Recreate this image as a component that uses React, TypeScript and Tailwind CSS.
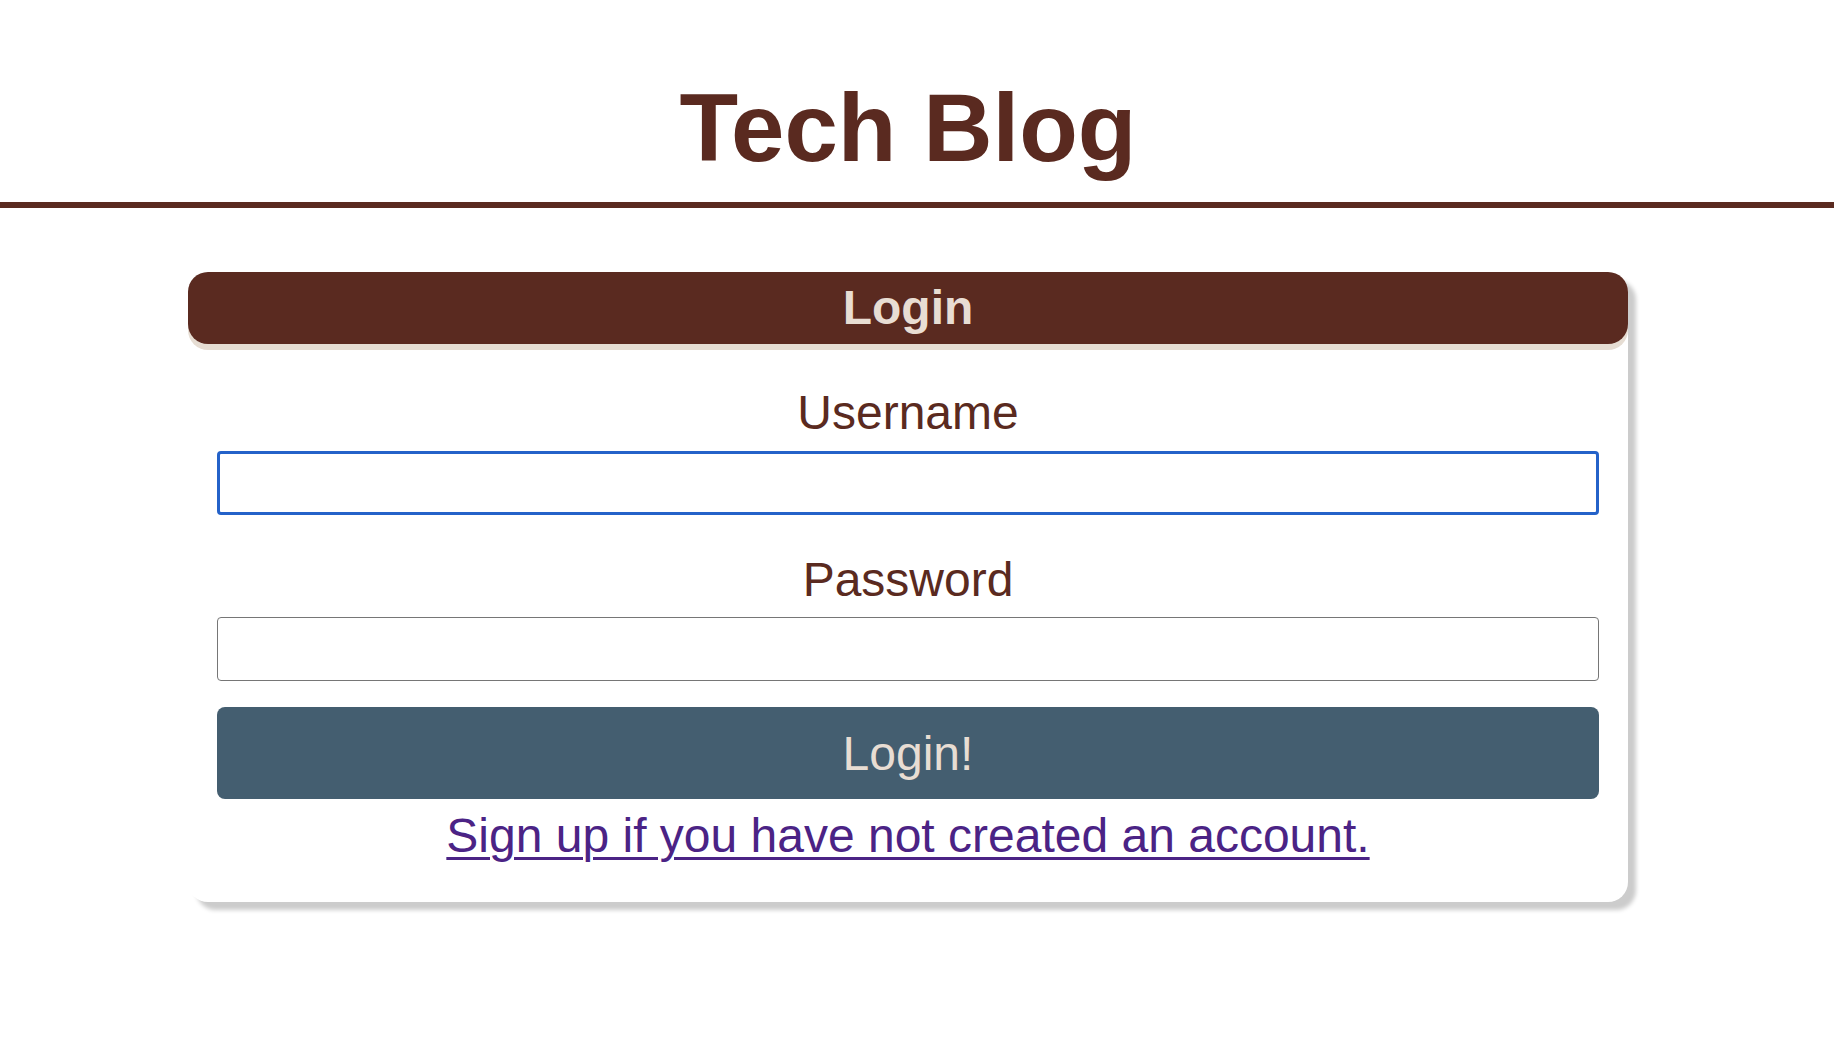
import { useState } from "react";

export default function App() {
  const [username, setUsername] = useState("");
  const [password, setPassword] = useState("");

  const handleSubmit = (e: React.FormEvent<HTMLFormElement>) => {
    e.preventDefault();
  };

  return (
    <div className="min-h-screen bg-white font-['Liberation_Sans',Arial,sans-serif]">
      {/* Header */}
      <header className="pt-[73px] pb-[19px] border-b-[6px] border-[#5a2a20]">
        <h1 className="w-[1816px] text-center text-[96px] leading-[110px] font-bold text-[#5a2a20]">
          Tech Blog
        </h1>
      </header>

      {/* Login card */}
      <main className="w-[1816px] pt-16 pb-16">
        <section className="mx-auto w-[1440px] rounded-[20px] bg-white shadow-[8px_8px_4px_#cccccc]">
          <h2 className="h-[72px] rounded-[20px] bg-[#5a2a20] text-center text-[48px] leading-[72px] font-bold text-[#e8ddd3] shadow-[0_6px_0_#e6ddd3]">
            Login
          </h2>
          <form
            onSubmit={handleSubmit}
            className="flex flex-col px-[29px] pt-[41px] pb-[39px] text-center"
          >
            <label
              htmlFor="username"
              className="text-[48px] leading-[55px] text-[#5a2a20]"
            >
              Username
            </label>
            <input
              id="username"
              type="text"
              value={username}
              onChange={(e) => setUsername(e.target.value)}
              className="mt-[11px] h-[64px] w-full rounded-[4px] border-[3px] border-[#2462c9] px-3 text-[32px] outline-none"
            />
            <label
              htmlFor="password"
              className="mt-[37px] text-[48px] leading-[55px] text-[#5a2a20]"
            >
              Password
            </label>
            <input
              id="password"
              type="password"
              value={password}
              onChange={(e) => setPassword(e.target.value)}
              className="mt-[10px] h-[64px] w-full rounded-[4px] border border-[#767676] px-3 text-[32px] outline-none"
            />
            <button
              type="submit"
              className="mt-[26px] h-[92px] w-full rounded-lg bg-[#445e70] text-[48px] leading-[55px] text-[#e8ddd3]"
            >
              Login!
            </button>
            <div className="mt-[9px] text-[48px] leading-[55px]">
              <a
                href="#signup"
                className="text-[#4b2385] underline decoration-[3px] underline-offset-[5px]"
              >
                Sign up if you have not created an account.
              </a>
            </div>
          </form>
        </section>
      </main>
    </div>
  );
}
